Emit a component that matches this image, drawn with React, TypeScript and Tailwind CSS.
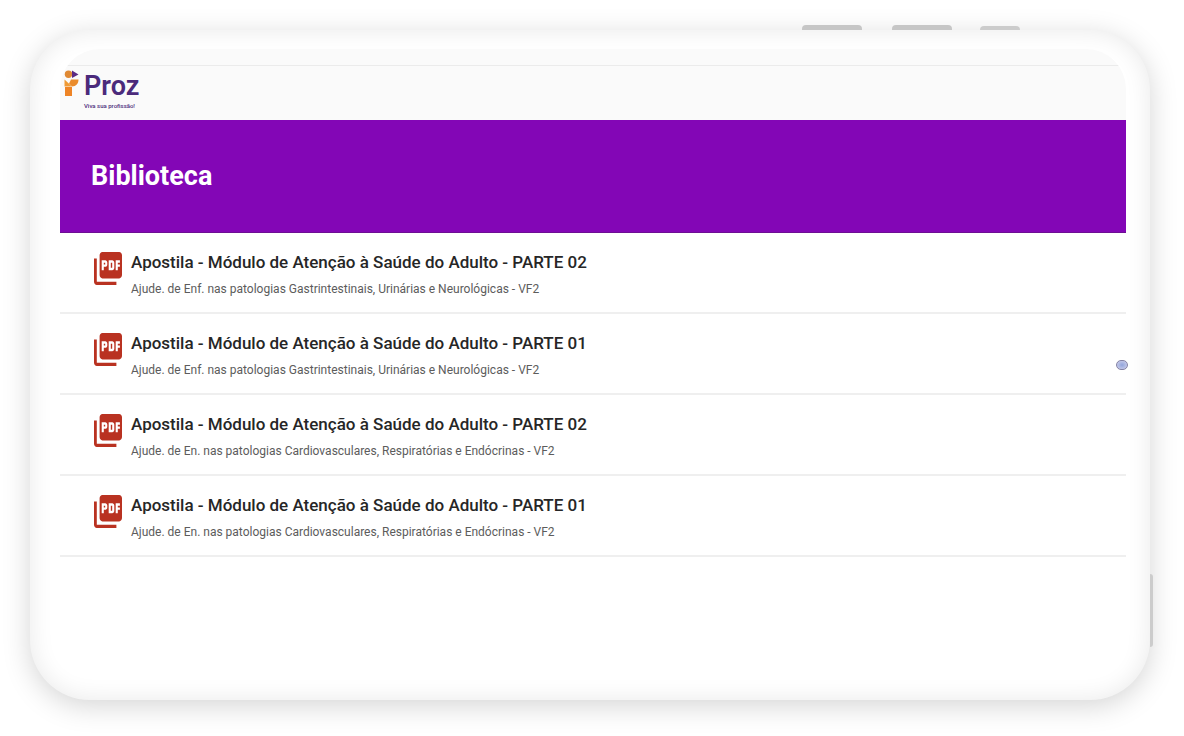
type LibraryItem = {
  id: number;
  title: string;
  description: string;
};

const items: LibraryItem[] = [
  {
    id: 1,
    title: 'Apostila - Módulo de Atenção à Saúde do Adulto - PARTE 02',
    description: 'Ajude. de Enf. nas patologias Gastrintestinais, Urinárias e Neurológicas - VF2'
  },
  {
    id: 2,
    title: 'Apostila - Módulo de Atenção à Saúde do Adulto - PARTE 01',
    description: 'Ajude. de Enf. nas patologias Gastrintestinais, Urinárias e Neurológicas - VF2'
  },
  {
    id: 3,
    title: 'Apostila - Módulo de Atenção à Saúde do Adulto - PARTE 02',
    description: 'Ajude. de En. nas patologias Cardiovasculares, Respiratórias e Endócrinas - VF2'
  },
  {
    id: 4,
    title: 'Apostila - Módulo de Atenção à Saúde do Adulto - PARTE 01',
    description: 'Ajude. de En. nas patologias Cardiovasculares, Respiratórias e Endócrinas - VF2'
  }
];

const PdfIcon = () => (
  <svg viewBox="2 2 20 20" preserveAspectRatio="none" className="h-[33px] w-7 shrink-0 fill-[#b93221]" aria-hidden="true">
    <path d="M20 2H8c-1.1 0-2 .9-2 2v12c0 1.1.9 2 2 2h12c1.1 0 2-.9 2-2V4c0-1.1-.9-2-2-2zm-8.500 7.500c0 .83-.67 1.500-1.500 1.500H9v2H7.500V7H10c.83 0 1.500.67 1.500 1.500v1zm5 2c0 .83-.67 1.500-1.500 1.500h-2.500V7H15c.83 0 1.500.67 1.500 1.500v3zm4-3H19v1h1.500V11H19v2h-1.500V7h3v1.500zM9 9.500h1v-1H9v1zM4 6H2v14c0 1.1.9 2 2 2h14v-2H4V6zm10 5.500h1v-3h-1v3z" />
  </svg>
);

const LogoMark = () => (
  <svg viewBox="0 0 15 27" className="h-[27px] w-[15px] shrink-0" aria-hidden="true">
    <circle cx="4.500" cy="4.200" r="3.700" fill="#e08a35" />
    <path d="M8 0.500L14.500 4.500L8 8z" fill="#5b2a83" />
    <path d="M0.500 9.500L8 16.500H0.500z" fill="#ef9a35" />
    <path d="M7 9.500H14.500C14.500 13.500 12 16.500 8 16.500L5 13.500z" fill="#ea8b2b" />
    <path d="M1 17H8V26H1z" fill="#ee8426" />
  </svg>
);

const ItemRow = ({ item }: { item: LibraryItem }) => (
  <li className="border-b-2 border-[#efefef]">
    <a href="#" className="flex items-start gap-[9px] pt-[19px] pb-[14px] pl-[34px]">
      <PdfIcon />
      <div>
        <h2 className="text-[17px] leading-5 font-medium text-[#262626]">{item.title}</h2>
        <p className="mt-2 text-xs leading-[18px] text-[#5c5c5c]">{item.description}</p>
      </div>
    </a>
  </li>
);

export default function App() {
  return (
    <div className="min-h-screen bg-white pt-[30px] pr-[34px] pb-9 pl-[30px] font-['Roboto',sans-serif]">
      <div className="relative min-h-[calc(100vh-66px)] rounded-[60px] bg-white px-6 pt-[19px] pl-[30px] shadow-[0_6px_28px_rgba(0,0,0,0.17),inset_0_0_24px_rgba(0,0,0,0.09)]">
        <div className="absolute -top-[5px] right-[130px] flex items-end">
          <span className="mr-[30px] h-[5px] w-[60px] rounded-t bg-[#c6c6c6]" />
          <span className="mr-7 h-[5px] w-[60px] rounded-t bg-[#c6c6c6]" />
          <span className="h-1 w-10 rounded-t bg-[#cccccc]" />
        </div>
        <span className="absolute -right-[3px] bottom-[53px] h-[73px] w-[3px] rounded-r bg-[#cccccc]" />
        <span className="absolute top-1/2 right-[22px] h-[10px] w-3 -translate-y-1/2 rounded-full border border-[#8583a5] bg-radial from-[#93a5dc] to-[#d3d3ec]" />

        <main className="overflow-hidden rounded-t-[40px]">
          <header className="bg-[#fafafa]">
            <div className="h-[17px] border-b border-[#ebebeb]" />
            <div className="flex h-[54px] items-start gap-[5px] pt-1 pl-1">
              <LogoMark />
              <div className="text-[#4b2a7b]">
                <p className="text-[27px] leading-8 font-semibold">Proz</p>
                <p className="text-[6px] leading-2 font-medium">Viva sua profissão!</p>
              </div>
            </div>
          </header>
          <section className="flex h-[113px] items-center border-b border-[#6d0f93] bg-[#8306b6] pl-[31px]">
            <h1 className="text-[27px] leading-8 font-bold text-white">Biblioteca</h1>
          </section>
          <ul>
            {items.map((item) => (
              <ItemRow key={item.id} item={item} />
            ))}
          </ul>
        </main>
      </div>
    </div>
  );
}
